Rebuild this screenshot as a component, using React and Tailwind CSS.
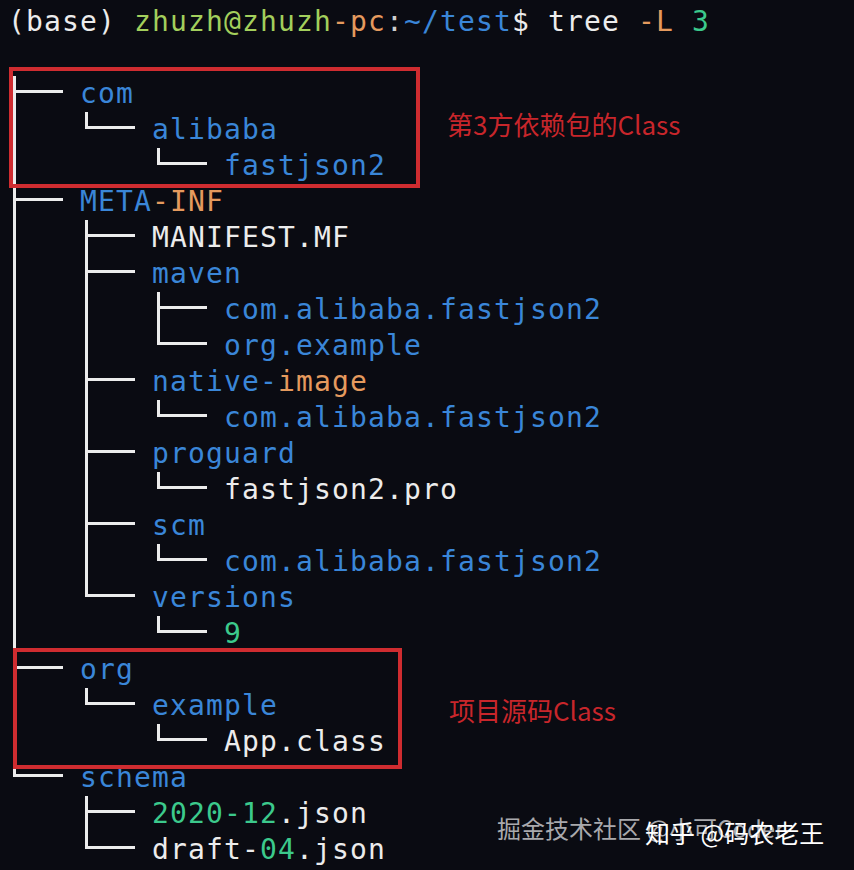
import React from "react";

const B = "text-[#3a86d8]";
const W = "text-[#ececec]";
const O = "text-[#e59a5e]";
const G = "text-[#3cc98c]";
const L = "text-[#a3cf5c]";

const tree = [
  [["tee"], [["com", B]]],
  [["pipe", "ell"], [["alibaba", B]]],
  [["pipe", "blank", "ell"], [["fastjson2", B]]],
  [["tee"], [["META", B], ["-INF", O]]],
  [["pipe", "tee"], [["MANIFEST.MF", W]]],
  [["pipe", "tee"], [["maven", B]]],
  [["pipe", "pipe", "tee"], [["com.alibaba.fastjson2", B]]],
  [["pipe", "pipe", "ell"], [["org.example", B]]],
  [["pipe", "tee"], [["native-", B], ["image", O]]],
  [["pipe", "pipe", "ell"], [["com.alibaba.fastjson2", B]]],
  [["pipe", "tee"], [["proguard", B]]],
  [["pipe", "pipe", "ell"], [["fastjson2.pro", W]]],
  [["pipe", "tee"], [["scm", B]]],
  [["pipe", "pipe", "ell"], [["com.alibaba.fastjson2", B]]],
  [["pipe", "ell"], [["versions", B]]],
  [["pipe", "blank", "ell"], [["9", G]]],
  [["tee"], [["org", B]]],
  [["pipe", "ell"], [["example", B]]],
  [["pipe", "blank", "ell"], [["App.class", W]]],
  [["ell"], [["schema", B]]],
  [["blank", "tee"], [["2020-12", G], [".json", W]]],
  [["blank", "ell"], [["draft-", W], ["04", G], [".json", W]]],
];

// one 4-column slot of the tree guide (├── │ └──)
const Guide = ({ kind }) => {
  if (kind === "blank") return <div className="w-[72px] h-9 shrink-0" />;
  if (kind === "pipe")
    return (
      <div className="w-[72px] h-9 shrink-0 pl-[5px]">
        <div className="h-full border-l-[3px] border-[#ececec]" />
      </div>
    );
  if (kind === "ell")
    return (
      <div className="w-[72px] h-9 shrink-0 pl-[5px]">
        <div className="h-[17px] w-[50px] border-l-[3px] border-b-[3px] border-[#ececec]" />
      </div>
    );
  return (
    <div className="w-[72px] h-9 shrink-0 pl-[5px]">
      <div className="h-full border-l-[3px] border-[#ececec] pt-[14px]">
        <div className="h-[3px] w-[47px] bg-[#ececec]" />
      </div>
    </div>
  );
};

const Row = ({ guides, parts }) => (
  <div className="flex h-9 items-start">
    {guides.map((g, i) => (
      <Guide key={i} kind={g} />
    ))}
    <div className="whitespace-pre">
      {parts.map(([t, c], i) => (
        <span key={i} className={c}>
          {t}
        </span>
      ))}
    </div>
  </div>
);

export default function App() {
  return (
    <div className="relative w-[854px] h-[870px] overflow-hidden bg-[#0a0b12] pl-2 pt-1 font-['DejaVu_Sans_Mono',monospace] text-[28px] leading-9 tracking-[1.14px]">
      <div className="h-9 whitespace-pre">
        <span className={W}>(base) </span>
        <span className={L}>zhuzh@zhuzh</span>
        <span className={O}>-pc</span>
        <span className="text-[#cfcfcf]">:</span>
        <span className={B}>~/test</span>
        <span className={W}>$ tree </span>
        <span className={O}>-L </span>
        <span className={G}>3</span>
      </div>
      <div className="h-9" />
      {tree.map(([g, p], i) => (
        <Row key={i} guides={g} parts={p} />
      ))}

      {/* annotations on top of the screenshot */}
      <div className="absolute left-[9px] top-[67px] w-[411px] h-[121px] border-[4px] border-[#cf2c30]" />
      <div className="absolute left-[13px] top-[648px] w-[389px] h-[121px] border-[4px] border-[#cf2c30]" />
      <div className="absolute left-[447px] top-[108px] text-[26px] leading-8 tracking-normal text-[#c8262b] font-['Noto_Sans_CJK_SC',sans-serif]">
        第3方依赖包的Class
      </div>
      <div className="absolute left-[449px] top-[694px] text-[26px] leading-8 tracking-normal text-[#c8262b] font-['Noto_Sans_CJK_SC',sans-serif]">
        项目源码Class
      </div>
      <div className="absolute left-[497px] top-[812px] text-[24px] leading-8 tracking-normal text-[#a9a9ad] font-['Noto_Sans_CJK_SC',sans-serif] whitespace-pre">
        掘金技术社区 @小可Coder
      </div>
      <div className="absolute left-[645px] top-[816px] text-[25px] leading-8 tracking-normal text-white font-['Noto_Sans_CJK_SC',sans-serif] whitespace-pre">
        知乎 @码农老王
      </div>
    </div>
  );
}
